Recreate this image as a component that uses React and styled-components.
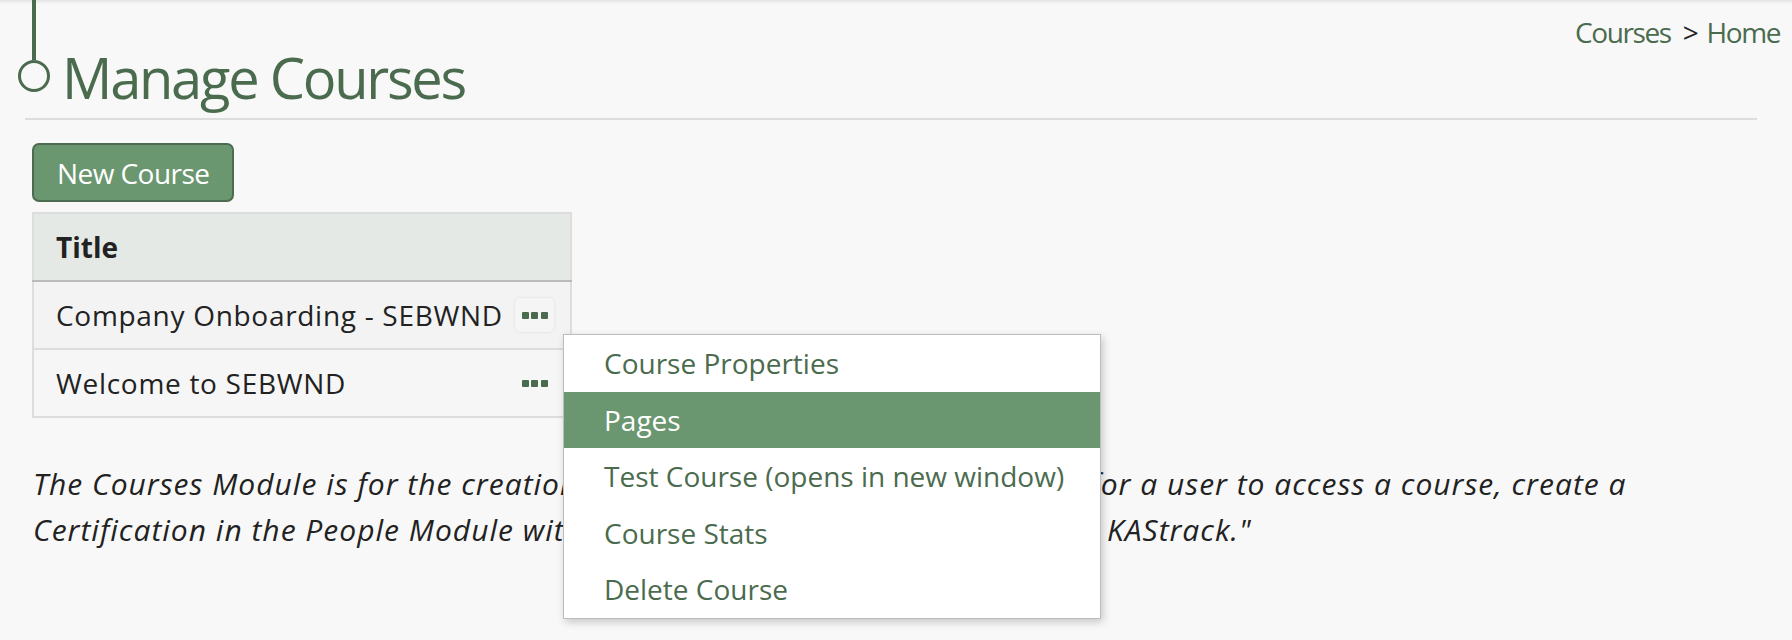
import React from 'react';
import styled, { createGlobalStyle } from 'styled-components';

const COLORS = {
  green: '#4b6b4e',
  greenFill: '#6a9770',
  text: '#222222',
  page: '#f8f8f8',
  rule: '#dddddd',
  headBg: '#e4e9e5',
};

const GlobalStyle = createGlobalStyle`
  html, body {
    margin: 0;
    background: ${COLORS.page};
  }
  body {
    font-family: "Open Sans", "Liberation Sans", sans-serif;
    font-size: 28px;
    color: ${COLORS.text};
  }
`;

const MENU_ITEMS = [
  'Course Properties',
  'Pages',
  'Test Course (opens in new window)',
  'Course Stats',
  'Delete Course',
];

const COURSES = [
  { title: 'Company Onboarding - SEBWND', open: true },
  { title: 'Welcome to SEBWND', open: false },
];

const Dots = () => (
  <DotRow>
    <Dot />
    <Dot />
    <Dot />
  </DotRow>
);

const CourseMenu = ({ active }) => (
  <Menu>
    {MENU_ITEMS.map((item) => (
      <MenuItem key={item} $active={item === active}>
        {item}
      </MenuItem>
    ))}
  </Menu>
);

const App = () => {
  return (
    <Page>
      <GlobalStyle />
      <Header>
        <TitleRow>
          <Timeline>
            <Stem />
            <Ring />
          </Timeline>
          <Title>Manage Courses</Title>
        </TitleRow>
        <Breadcrumb>
          <Crumb>Courses</Crumb>
          <Sep>&gt;</Sep>
          <Crumb>Home</Crumb>
        </Breadcrumb>
      </Header>
      <Rule />

      <Content>
        <NewButton>New Course</NewButton>
        <CourseTable>
          <thead>
            <tr>
              <HeadCell colSpan={2}>Title</HeadCell>
            </tr>
          </thead>
          <tbody>
            {COURSES.map((course) => (
              <Row key={course.title} $hover={course.open}>
                <TitleCell>{course.title}</TitleCell>
                <ActionCell>
                  <ActionWrap>
                    <ActionButton $open={course.open}>
                      <Dots />
                    </ActionButton>
                    {course.open && <CourseMenu active="Pages" />}
                  </ActionWrap>
                </ActionCell>
              </Row>
            ))}
          </tbody>
        </CourseTable>

        <Description>
          <Line>
            The Courses Module is for the creation and upkeep of all courses. In order
            for a user to access a course, create a
          </Line>
          <Line>
            Certification in the People Module with the course attached and assign it in
            KAStrack."
          </Line>
        </Description>
      </Content>
    </Page>
  );
};

const Page = styled.div`
  min-height: 640px;
  box-shadow: inset 0 4px 4px -3px rgba(0, 0, 0, 0.12);
`;

const Header = styled.header`
  display: flex;
  justify-content: space-between;
  align-items: flex-start;
  padding: 0 12px 0 17px;
`;

const TitleRow = styled.div`
  display: flex;
  align-items: flex-start;
`;

const Timeline = styled.div`
  display: flex;
  flex-direction: column;
  align-items: center;
  width: 34px;
`;

const Stem = styled.div`
  width: 4px;
  height: 60px;
  background: ${COLORS.green};
`;

const Ring = styled.div`
  box-sizing: border-box;
  width: 32px;
  height: 32px;
  border: 3px solid ${COLORS.green};
  border-radius: 50%;
`;

const Title = styled.h1`
  margin: 45px 0 0 11px;
  font-size: 56px;
  line-height: 64px;
  font-weight: 400;
  color: ${COLORS.green};
  letter-spacing: -0.04em;
`;

const Breadcrumb = styled.nav`
  margin-top: 13px;
  font-size: 28px;
  line-height: 38px;
  letter-spacing: -0.05em;
`;

const Crumb = styled.span`
  color: ${COLORS.green};
`;

const Sep = styled.span`
  color: ${COLORS.text};
  margin: 0 9px 0 12px;
`;

const Rule = styled.hr`
  margin: 9px 35px 0 25px;
  height: 2px;
  border: none;
  background: ${COLORS.rule};
`;

const Content = styled.main`
  padding: 23px 0 0 32px;
`;

const NewButton = styled.button`
  box-sizing: border-box;
  height: 59px;
  padding: 0 23px;
  font-family: inherit;
  font-size: 28px;
  letter-spacing: -0.02em;
  color: #ffffff;
  background: ${COLORS.greenFill};
  border: 2px solid #4d6b50;
  border-radius: 7px;
`;

const CourseTable = styled.table`
  margin-top: 10px;
  width: 540px;
  border-collapse: collapse;
  border: 2px solid ${COLORS.rule};
`;

const HeadCell = styled.th`
  height: 66px;
  padding: 0 22px;
  text-align: left;
  font-size: 28px;
  font-weight: 700;
  color: ${COLORS.text};
  background: ${COLORS.headBg};
  border-bottom: 2px solid #bbbbbb;
`;

const Row = styled.tr`
  background: ${(p) => (p.$hover ? '#f3f3f3' : '#f6f6f6')};
  border-bottom: 2px solid ${COLORS.rule};
`;

const TitleCell = styled.td`
  height: 66px;
  padding: 0 0 0 22px;
  white-space: nowrap;
  letter-spacing: 0.025em;
`;

const ActionCell = styled.td`
  width: 39px;
  padding: 0 16px 0 8px;
`;

const ActionWrap = styled.div`
  position: relative;
`;

const ActionButton = styled.div`
  box-sizing: border-box;
  width: 39px;
  height: 34px;
  display: flex;
  align-items: center;
  justify-content: center;
  border-radius: 5px;
  background: ${(p) => (p.$open ? '#f5f5f5' : 'transparent')};
  box-shadow: ${(p) => (p.$open ? '0 0 3px rgba(0, 0, 0, 0.1)' : 'none')};
`;

const DotRow = styled.div`
  display: flex;
  gap: 2.5px;
`;

const Dot = styled.span`
  width: 7px;
  height: 7px;
  border-radius: 1px;
  background: ${COLORS.green};
`;

const Menu = styled.ul`
  position: absolute;
  top: calc(100% + 2px);
  left: 48px;
  z-index: 10;
  box-sizing: border-box;
  width: 538px;
  margin: 0;
  padding: 0;
  list-style: none;
  background: #ffffff;
  border: 1px solid #bdbdbd;
  box-shadow: 2px 3px 8px rgba(0, 0, 0, 0.2);
`;

const MenuItem = styled.li`
  padding: 9px 40px;
  line-height: 38.6px;
  font-size: 28px;
  white-space: nowrap;
  color: ${(p) => (p.$active ? '#ffffff' : COLORS.green)};
  background: ${(p) => (p.$active ? COLORS.greenFill : 'transparent')};
`;

const Description = styled.p`
  margin: 43px 0 0 1px;
  font-style: italic;
  font-size: 30px;
  line-height: 46px;
  letter-spacing: 1px;
`;

const Line = styled.span`
  display: block;
  white-space: nowrap;
`;

export default App;
